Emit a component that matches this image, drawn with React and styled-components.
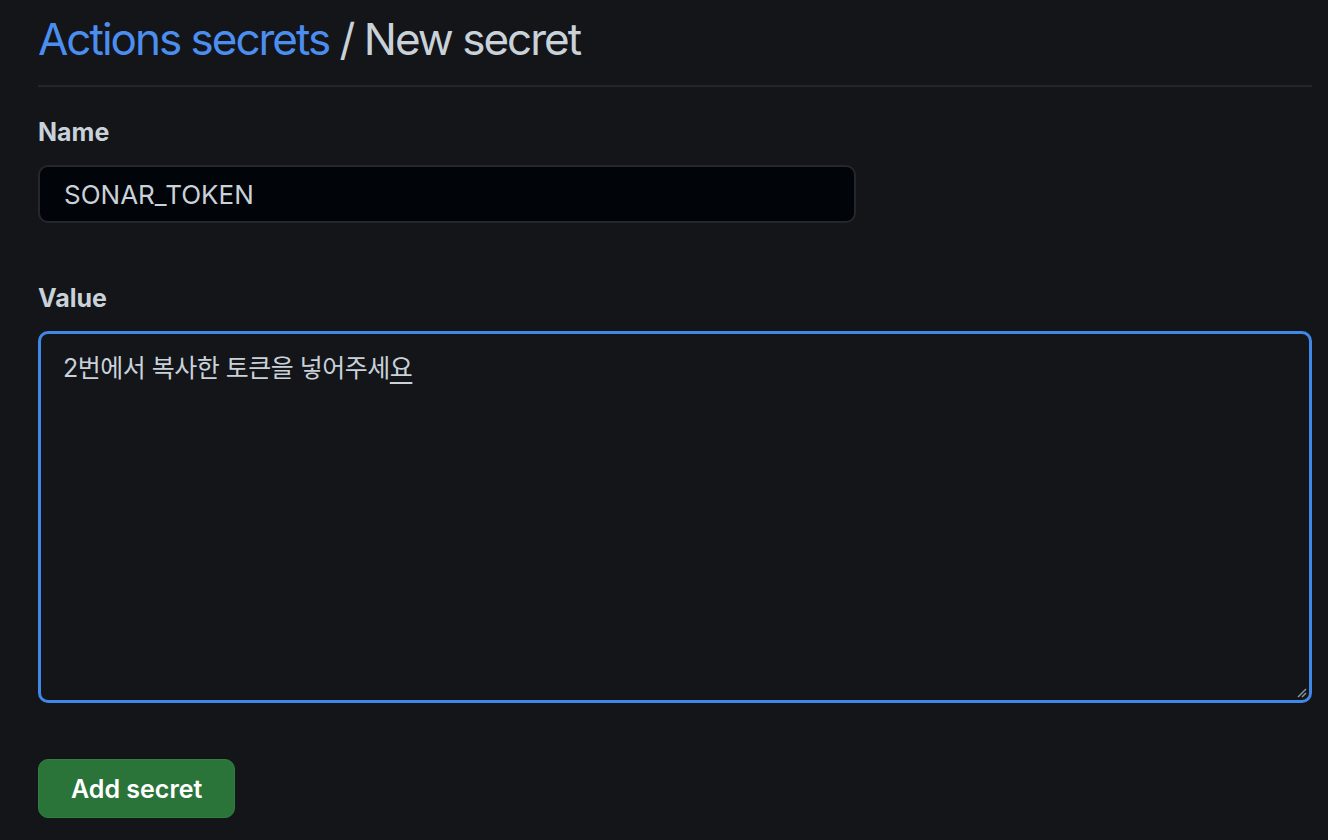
import React from 'react'
import styled, { createGlobalStyle } from 'styled-components'

const GlobalStyle = createGlobalStyle`
  html, body {
    margin: 0;
    background: #131519;
  }
  body {
    font-family: Inter, "Noto Sans CJK KR", "Liberation Sans", sans-serif;
    color: #c9d1d9;
  }
`

const Page = styled.div`
  width: 1328px;
  height: 840px;
  box-sizing: border-box;
  padding: 0 16px 0 38px;
  overflow: hidden;
`

const Subhead = styled.div`
  padding-top: 11px;
  padding-bottom: 18px;
  border-bottom: 2px solid #21262d;
`

const Heading = styled.h2`
  margin: 0;
  font-size: 44px;
  font-weight: 400;
  line-height: 56px;
  letter-spacing: -2px;
  color: #c9d1d9;
`

const Crumb = styled.a`
  color: #4c8ef0;
  text-decoration: none;
`

const Form = styled.form`
  display: flex;
  flex-direction: column;
  padding-top: 32px;
`

const Field = styled.div`
  display: flex;
  flex-direction: column;
  gap: 20px;
  margin-bottom: ${p => p.$gap}px;
`

const Label = styled.label`
  font-size: 25px;
  font-weight: 700;
  line-height: 26px;
  color: #c9d1d9;
`

const Input = styled.div`
  box-sizing: border-box;
  width: 818px;
  height: 58px;
  padding: 0 24px;
  display: flex;
  align-items: center;
  background: #010409;
  border: 2px solid #24282e;
  border-radius: 10px;
  font-size: 26px;
  color: #c9d1d9;
`

const TextArea = styled.div`
  position: relative;
  box-sizing: border-box;
  width: 1274px;
  height: 372px;
  padding: 16px 22px;
  background: #131519;
  border: 3px solid #3f88e8;
  border-radius: 10px;
  font-size: 25px;
  line-height: 36px;
  letter-spacing: -0.5px;
  color: #c9d1d9;
`

const Composing = styled.span`
  text-decoration: underline;
  text-underline-offset: 5px;
  text-decoration-thickness: 2px;
`

const Grip = styled.svg`
  position: absolute;
  right: 2px;
  bottom: 2px;
`

const Button = styled.button`
  align-self: flex-start;
  height: 59px;
  padding: 0 32px;
  background: #2a7439;
  border: 1px solid #2f7f40;
  border-radius: 10px;
  color: #ffffff;
  font-family: inherit;
  font-size: 25px;
  font-weight: 600;
`

export default function App() {
  return (
    <>
      <GlobalStyle />
      <Page>
        <Subhead>
          <Heading>
            <Crumb href="#">Actions secrets</Crumb> / New secret
          </Heading>
        </Subhead>
        <Form>
          <Field $gap={62}>
            <Label>Name</Label>
            <Input>SONAR_TOKEN</Input>
          </Field>
          <Field $gap={56}>
            <Label>Value</Label>
            <TextArea>
              2번에서 복사한 토큰을 넣어주세<Composing>요</Composing>
              <Grip width="12" height="12" viewBox="0 0 12 12">
                <path d="M11 3 L3 11 M11 7 L7 11" stroke="#8b949e" strokeWidth="1.5" />
              </Grip>
            </TextArea>
          </Field>
          <Button type="button">Add secret</Button>
        </Form>
      </Page>
    </>
  )
}
